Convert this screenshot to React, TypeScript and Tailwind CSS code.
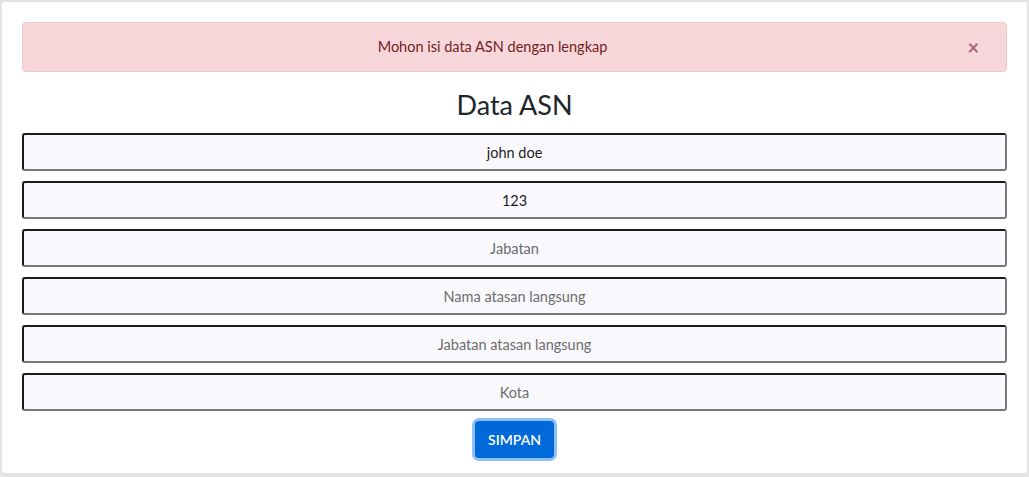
import { useState } from 'react'

const FIELDS = [
  { name: 'nama', placeholder: 'Nama', value: 'john doe' },
  { name: 'nip', placeholder: 'NIP', value: '123' },
  { name: 'jabatan', placeholder: 'Jabatan', value: '' },
  { name: 'atasan', placeholder: 'Nama atasan langsung', value: '' },
  { name: 'jabatanAtasan', placeholder: 'Jabatan atasan langsung', value: '' },
  { name: 'kota', placeholder: 'Kota', value: '' },
]

export default function App() {
  const [values, setValues] = useState<Record<string, string>>(
    Object.fromEntries(FIELDS.map((f) => [f.name, f.value])),
  )
  const [showAlert, setShowAlert] = useState(true)

  return (
    <div
      className="min-h-screen bg-[#e4e4e6] p-[2px]"
      style={{ fontFamily: '"Gill Sans", "Gill Sans MT", Lato, "Noto Sans", sans-serif' }}
    >
      <div className="flex h-[471px] flex-col rounded-[3px] bg-white px-[20px] pt-[20px]">
        {showAlert && (
          <div className="relative flex h-[50px] items-center justify-center rounded-[4px] border border-[#f5c6cb] bg-[#f8d7da] pl-[20px] pr-[64px] text-[14.5px] text-[#721c24]">
            Mohon isi data ASN dengan lengkap
            <button
              type="button"
              onClick={() => setShowAlert(false)}
              aria-label="Close"
              className="absolute right-[27px] top-1/2 -translate-y-1/2 text-[20px] font-bold leading-none text-[#a66a74]"
            >
              ×
            </button>
          </div>
        )}

        <h1 className="mt-[15px] mb-[10px] text-center text-[27px] leading-[36px] text-[#212529]">Data ASN</h1>

        <form className="flex flex-col gap-[10px]" onSubmit={(e) => e.preventDefault()}>
          {FIELDS.map((f) => (
            <input
              key={f.name}
              name={f.name}
              placeholder={f.placeholder}
              value={values[f.name]}
              onChange={(e) => setValues({ ...values, [f.name]: e.target.value })}
              className="h-[38px] w-full rounded-[3px] border-2 border-t-[#1b1b1b] border-l-[#1b1b1b] border-b-[#777777] border-r-[#777777] bg-[#f9f9fd] text-center text-[14.5px] text-[#1d1d1d] outline-none placeholder:text-[#6c6c6c]"
            />
          ))}
          <div className="flex justify-center">
            <button
              type="submit"
              className="h-[37px] rounded-[4px] bg-[#0069d9] px-[13px] text-[14px] font-semibold text-white ring-[3px] ring-[#8cc1fb]"
            >
              SIMPAN
            </button>
          </div>
        </form>
      </div>
    </div>
  )
}
